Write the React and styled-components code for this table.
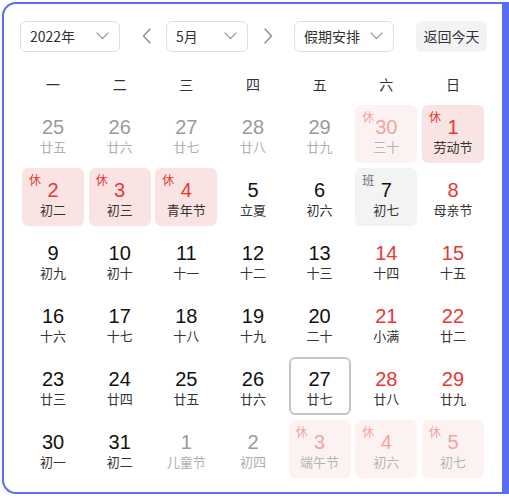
import React from "react";
import styled, { createGlobalStyle, css } from "styled-components";

const Global = createGlobalStyle`
  html, body { margin: 0; padding: 0; background: #ffffff; }
  body { font-family: "Liberation Sans", "Noto Sans CJK SC", sans-serif; }
  * { box-sizing: border-box; }
`;

const Frame = styled.div`
  margin: 2px 0 0 2px;
  width: 507px;
  height: 492px;
  border: 2px solid #5b6ef0;
  border-right-width: 7px;
  border-radius: 14px 0 0 14px;
  background: #fff;
  box-shadow: 0 2px 6px rgba(0, 0, 0, 0.08);
  padding: 16px 0 0 16px;
`;

const Toolbar = styled.div`
  display: flex;
  align-items: center;
  height: 32px;
  width: 467px;
`;

const Select = styled.div`
  width: ${(p) => p.$w}px;
  height: 31px;
  border: 1px solid #dcdfe6;
  border-radius: 6px;
  display: flex;
  align-items: center;
  justify-content: space-between;
  padding: 0 10px 0 9px;
  font-family: "Noto Sans CJK SC", sans-serif;
  font-size: 14px;
  color: #303133;
`;

const Arrow = styled.div`
  width: 12px;
  display: flex;
  justify-content: center;
  color: #8a8d94;
  margin: ${(p) => p.$m};
`;

const TodayBtn = styled.div`
  margin-left: auto;
  width: 71px;
  height: 31px;
  border-radius: 6px;
  background: #f3f3f5;
  display: flex;
  align-items: center;
  justify-content: center;
  font-family: "Noto Sans CJK SC", sans-serif;
  font-size: 14px;
  color: #303133;
`;

const WeekRow = styled.div`
  display: grid;
  grid-template-columns: repeat(7, 62px);
  column-gap: 4.67px;
  margin: 15px 0 0 2px;
  height: 34px;
  align-items: center;
`;

const WeekDay = styled.div`
  text-align: center;
  font-family: "Noto Sans CJK SC", sans-serif;
  font-size: 14px;
  color: #303133;
`;

const Grid = styled.div`
  display: grid;
  grid-template-columns: repeat(7, 62px);
  grid-auto-rows: 58px;
  column-gap: 4.67px;
  row-gap: 5px;
  margin: 4px 0 0 2px;
`;

const bgFor = {
  rest: "#fae3e3",
  restFaded: "#fdf2f2",
  work: "#f3f3f4",
};

const Cell = styled.div`
  position: relative;
  border-radius: 6px;
  background: ${(p) => bgFor[p.$kind] || "transparent"};
  display: flex;
  flex-direction: column;
  align-items: center;
  padding-top: 11px;
  ${(p) =>
    p.$today &&
    css`
      border: 2px solid #c3c6cd;
      padding-top: 9px;
    `}
`;

const Num = styled.div`
  font-family: "Liberation Sans", "Noto Sans CJK SC", sans-serif;
  font-size: 20px;
  line-height: 22px;
  color: ${(p) => p.$c};
`;

const Lunar = styled.div`
  font-family: "Noto Sans CJK SC", sans-serif;
  font-size: 13px;
  line-height: 18px;
  margin-top: 0px;
  color: ${(p) => p.$c};
`;

const Badge = styled.span`
  position: absolute;
  left: 7px;
  top: 5px;
  font-family: "Noto Sans CJK SC", sans-serif;
  font-size: 12px;
  line-height: 14px;
  color: ${(p) => p.$c};
`;

const Chevron = () => (
  <svg width="13" height="8" viewBox="0 0 13 8" fill="none">
    <path d="M1 1l5.5 5.5L12 1" stroke="#9a9ca3" strokeWidth="1.2" strokeLinecap="round" strokeLinejoin="round" />
  </svg>
);

const Side = ({ dir }) => (
  <svg width="9" height="16" viewBox="0 0 9 16" fill="none">
    <path
      d={dir === "l" ? "M8 1L1.5 8L8 15" : "M1 1l6.5 7L1 15"}
      stroke="#8a8d94"
      strokeWidth="1.4"
      strokeLinecap="round"
      strokeLinejoin="round"
    />
  </svg>
);

// o: other month, k: kind, r: red number (weekend), t: today
const days = [
  { n: 25, l: "廿五", o: 1 },
  { n: 26, l: "廿六", o: 1 },
  { n: 27, l: "廿七", o: 1 },
  { n: 28, l: "廿八", o: 1 },
  { n: 29, l: "廿九", o: 1 },
  { n: 30, l: "三十", o: 1, k: "rest" },
  { n: 1, l: "劳动节", k: "rest" },
  { n: 2, l: "初二", k: "rest" },
  { n: 3, l: "初三", k: "rest" },
  { n: 4, l: "青年节", k: "rest" },
  { n: 5, l: "立夏" },
  { n: 6, l: "初六" },
  { n: 7, l: "初七", k: "work" },
  { n: 8, l: "母亲节", r: 1 },
  { n: 9, l: "初九" },
  { n: 10, l: "初十" },
  { n: 11, l: "十一" },
  { n: 12, l: "十二" },
  { n: 13, l: "十三" },
  { n: 14, l: "十四", r: 1 },
  { n: 15, l: "十五", r: 1 },
  { n: 16, l: "十六" },
  { n: 17, l: "十七" },
  { n: 18, l: "十八" },
  { n: 19, l: "十九" },
  { n: 20, l: "二十" },
  { n: 21, l: "小满", r: 1 },
  { n: 22, l: "廿二", r: 1 },
  { n: 23, l: "廿三" },
  { n: 24, l: "廿四" },
  { n: 25, l: "廿五" },
  { n: 26, l: "廿六" },
  { n: 27, l: "廿七", t: 1 },
  { n: 28, l: "廿八", r: 1 },
  { n: 29, l: "廿九", r: 1 },
  { n: 30, l: "初一" },
  { n: 31, l: "初二" },
  { n: 1, l: "儿童节", o: 1 },
  { n: 2, l: "初四", o: 1 },
  { n: 3, l: "端午节", o: 1, k: "rest" },
  { n: 4, l: "初六", o: 1, k: "rest" },
  { n: 5, l: "初七", o: 1, k: "rest" },
];

function DayCell({ d }) {
  let kind = d.k;
  let numC = "#111";
  let lunC = "#333";
  let badge = null;
  if (d.k === "rest") {
    if (d.o) {
      kind = "restFaded";
      numC = "#f4a3a3";
      lunC = "#b5b5b5";
      badge = <Badge $c="#f4a3a3">休</Badge>;
    } else {
      numC = "#e53935";
      lunC = "#333";
      badge = <Badge $c="#e53935">休</Badge>;
    }
  } else if (d.k === "work") {
    badge = <Badge $c="#6b6e7e">班</Badge>;
  } else if (d.o) {
    numC = "#9a9a9a";
    lunC = "#b0b0b0";
  } else if (d.r) {
    numC = "#e53935";
  }
  return (
    <Cell $kind={kind} $today={!!d.t}>
      {badge}
      <Num $c={numC}>{d.n}</Num>
      <Lunar $c={lunC}>{d.l}</Lunar>
    </Cell>
  );
}

export default function App() {
  return (
    <>
      <Global />
      <Frame>
        <Toolbar>
          <Select $w={100}>
            <span>2022年</span>
            <Chevron />
          </Select>
          <Arrow $m="0 14px 0 20px">
            <Side dir="l" />
          </Arrow>
          <Select $w={82}>
            <span>5月</span>
            <Chevron />
          </Select>
          <Arrow $m="0 20px 0 14px">
            <Side dir="r" />
          </Arrow>
          <Select $w={100}>
            <span>假期安排</span>
            <Chevron />
          </Select>
          <TodayBtn>返回今天</TodayBtn>
        </Toolbar>
        <WeekRow>
          {["一", "二", "三", "四", "五", "六", "日"].map((w) => (
            <WeekDay key={w}>{w}</WeekDay>
          ))}
        </WeekRow>
        <Grid>
          {days.map((d, i) => (
            <DayCell key={i} d={d} />
          ))}
        </Grid>
      </Frame>
    </>
  );
}
